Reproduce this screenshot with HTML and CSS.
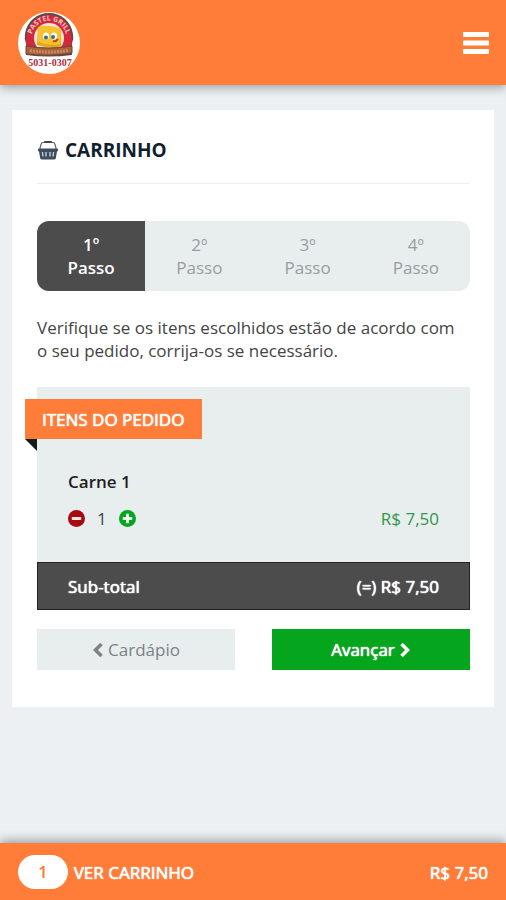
FILE: index.html
```html
<!DOCTYPE html>
<html lang="pt-BR">
<head>
<meta charset="utf-8">
<meta name="viewport" content="width=device-width, initial-scale=1">
<title>Carrinho</title>
<link rel="stylesheet" href="styles.css">
</head>
<body>
<header class="topbar">
  <a class="logo" href="#" aria-label="Pastel Grill">
    <svg viewBox="0 0 62 62" width="62" height="62" aria-hidden="true">
      <defs><path id="arc" d="M13.500 31A17.800 19 0 1 1 48.500 31"/></defs>
      <circle cx="31" cy="31" r="31" fill="#fff"/>
      <path d="M8 43L8 31Q6 27 7 22C9 9 19 1 31 1S53 9 55 22Q56 27 54 31L54 43Q31 46 8 43Z" fill="#5c4a4b"/>
      <path d="M9 35Q7 29 9 22C11 10 20 3 31 3S51 10 53 22Q55 29 53 35Z" fill="#d2283a"/>
      <circle cx="31" cy="26" r="15" fill="#f8e3d2"/>
      <text class="logo-name"><textPath href="#arc" startOffset="50%" text-anchor="middle">PASTEL GRILL</textPath></text>
      <path d="M20 15Q31 12 43 17L43 35Q31 37 19 33Z" fill="#e5a51d"/>
      <path d="M20 15Q31 12 43 17L42 32Q31 34 20 30Z" fill="#f7c32c"/>
      <ellipse cx="28" cy="24" rx="3" ry="3.500" fill="#fff"/>
      <ellipse cx="36" cy="24" rx="3" ry="3.500" fill="#fff"/>
      <circle cx="28" cy="25.500" r="2" fill="#24719b"/>
      <circle cx="35" cy="25" r="2" fill="#24719b"/>
      <path d="M35 29Q38 30 40 27" fill="none" stroke="#ce3a26" stroke-width="2"/>
      <path d="M8 34Q31 38 54 34V41Q31 45 8 42Z" fill="#a9623c" stroke="#6d443a"/>
      <path d="M12 38.500Q31 41.500 50 38.500" fill="none" stroke="#c98a58" stroke-width="3" stroke-dasharray="2 1"/>
      <text class="logo-phone" x="32" y="54" text-anchor="middle">5031-0307</text>
    </svg>
  </a>
  <button class="menu" type="button" aria-label="Menu">
    <svg viewBox="0 0 26 22" width="26" height="22" aria-hidden="true"><path fill="#fff" d="M1 0H25Q26 0 26 1V4Q26 5 25 5H1Q0 5 0 4V1Q0 0 1 0ZM1 8.500H25Q26 8.500 26 9.500V12.500Q26 13.500 25 13.500H1Q0 13.500 0 12.500V9.500Q0 8.500 1 8.500ZM1 17H25Q26 17 26 18V21Q26 22 25 22H1Q0 22 0 21V18Q0 17 1 17Z"/></svg>
  </button>
</header>

<main class="card">
  <h1 class="title">
    <svg viewBox="0 0 22 20" width="22" height="20" aria-hidden="true">
      <path d="M2.800 9L4 4.500Q4.500 2.500 6 2.500H16Q17.500 2.500 18 4.500L19.200 9" fill="none" stroke="#5a6977" stroke-width="1.200"/>
      <rect x="7" y="1" width="8" height="2" rx="1" fill="#34475a"/>
      <path d="M2 8.500H20Q21 8.500 21 9.500V10.500Q21 11.500 20 11.500L18.900 18Q18.600 19.500 17 19.500H5Q3.400 19.500 3.100 18L2 11.500Q1 11.500 1 10.500V9.500Q1 8.500 2 8.500Z" fill="#3c4d5e"/>
      <path d="M5.500 12L6 16.500M9 12V16.500M13 12V16.500M16.500 12L16 16.500" stroke="#c3ccd2" stroke-width="1.400"/>
    </svg>
    CARRINHO
  </h1>

  <ol class="steps">
    <li class="step active" aria-current="step">1º<br>Passo</li>
    <li class="step">2º<br>Passo</li>
    <li class="step">3º<br>Passo</li>
    <li class="step">4º<br>Passo</li>
  </ol>

  <p class="intro">Verifique se os itens escolhidos estão de acordo com o seu pedido, corrija-os se necessário.</p>

  <section class="order">
    <h2 class="ribbon">ITENS DO PEDIDO</h2>
    <div class="item">
      <h3 class="item-name">Carne 1</h3>
      <div class="row">
        <div class="qty">
          <button type="button" aria-label="Diminuir">
            <svg viewBox="0 0 18 18" width="17" height="17" aria-hidden="true"><circle cx="9" cy="9" r="9" fill="#a60a10"/><rect x="4" y="7.500" width="10" height="3" rx="0.500" fill="#f3e6e6"/></svg>
          </button>
          <span>1</span>
          <button type="button" aria-label="Aumentar">
            <svg viewBox="0 0 18 18" width="17" height="17" aria-hidden="true"><circle cx="9" cy="9" r="9" fill="#06a51e"/><path d="M7.500 4H10.500V7.500H14V10.500H10.500V14H7.500V10.500H4V7.500H7.500Z" fill="#eefaf0"/></svg>
          </button>
        </div>
        <span class="price">R$ 7,50</span>
      </div>
    </div>
    <div class="subtotal"><span>Sub-total</span><span>(=) R$ 7,50</span></div>
  </section>

  <div class="actions">
    <button class="btn back" type="button">
      <svg viewBox="0 0 12 16" width="12" height="16" aria-hidden="true"><path d="M9.500 2L3.500 8L9.500 14" fill="none" stroke="currentColor" stroke-width="3.500"/></svg>
      Cardápio
    </button>
    <button class="btn next" type="button">
      Avançar
      <svg viewBox="0 0 12 16" width="12" height="16" aria-hidden="true"><path d="M2.500 2L8.500 8L2.500 14" fill="none" stroke="currentColor" stroke-width="3.500"/></svg>
    </button>
  </div>
</main>

<a class="cartbar" href="#">
  <span class="count">1</span>
  <span class="label">VER CARRINHO</span>
  <span class="total">R$ 7,50</span>
</a>
</body>
</html>
```
FILE: styles.css
```css
* {
  box-sizing: border-box;
}

body {
  margin: 0;
  min-height: 100vh;
  display: flex;
  flex-direction: column;
  background: #ecf0f3;
  color: #444;
  font: 17px/23px "Open Sans", sans-serif;
}

button {
  padding: 0;
  border: 0;
  background: none;
  font: inherit;
  cursor: pointer;
}

svg {
  display: block;
}

.topbar {
  display: flex;
  align-items: center;
  justify-content: space-between;
  padding: 12px 17px 11px 18px;
  background: #ff7d38;
  box-shadow: 0 2px 10px rgba(50, 65, 75, 0.5);
}

.logo-name {
  fill: #f9c9c0;
  font: bold 7px "Open Sans", sans-serif;
}

.logo-phone {
  fill: #b02a40;
  font: bold 10px "Liberation Serif", serif;
}

.card {
  margin: 25px 12px;
  padding: 25px 24px 37px 25px;
  background: #fff;
}

.title {
  display: flex;
  align-items: center;
  gap: 6px;
  margin: 0 0 37px;
  padding: 3px 0 21px;
  border-bottom: 1px solid #eceff1;
  color: #101f2e;
  font-size: 19px;
  font-weight: 700;
  line-height: 24px;
}

.steps {
  display: flex;
  margin: 0;
  padding: 0;
  overflow: hidden;
  border-radius: 12px;
  background: #e8edee;
  color: #989da0;
  list-style: none;
  text-align: center;
}

.step {
  flex: 1;
  padding: 12px 0;
}

.active {
  background: #4c4c4c;
  color: #fff;
  font-weight: 600;
}

.intro {
  margin: 25px 0;
  padding-right: 8px;
}

.order {
  background: #e8edee;
}

.order::before {
  content: "";
  display: block;
  height: 12px;
}

/* Regular letterforms on coloured bars, thickened slightly */
.ribbon,
.subtotal,
.next,
.cartbar {
  color: #fff;
  font-weight: 400;
  text-shadow: 0 0 1px currentColor, 0 0 1px currentColor;
}

.ribbon {
  position: relative;
  width: fit-content;
  margin: 0 0 0 -12px;
  padding: 9px 18px 8px 17px;
  background: #ff7d38;
  font-size: 17px;
}

.ribbon::after {
  content: "";
  position: absolute;
  top: 100%;
  left: 0;
  border-top: 12px solid #161a1b;
  border-left: 12px solid transparent;
}

.item {
  padding: 31px 31px 32px;
}

.item-name {
  margin: 0 0 14px;
  color: #1e1e1e;
  font-size: 17px;
  font-weight: 600;
}

.row,
.qty,
.subtotal,
.actions {
  display: flex;
  align-items: center;
}

.row,
.subtotal {
  justify-content: space-between;
}

.qty {
  gap: 12px;
}

.price {
  color: #30994a;
}

.subtotal {
  padding: 12px 30px 11px;
  border: 1px solid #222;
  background: #4c4c4c;
}

.actions {
  gap: 37px;
  margin-top: 19px;
}

.btn {
  display: flex;
  flex: 1;
  align-items: center;
  justify-content: center;
  gap: 4px;
  padding: 9px;
}

.back {
  background: #e8edee;
  color: #7c8285;
}

.next {
  background: #06a51e;
}

.cartbar {
  display: flex;
  align-items: center;
  gap: 6px;
  margin-top: auto;
  padding: 12px 18px 11px;
  background: #ff7d38;
  box-shadow: 0 -2px 10px rgba(50, 65, 75, 0.5);
  text-decoration: none;
}

.count {
  padding: 5px 20px 6px;
  border-radius: 17px;
  background: #fff;
  color: #ff7d38;
  font-weight: 600;
  text-shadow: none;
}

.total {
  margin-left: auto;
}
```
